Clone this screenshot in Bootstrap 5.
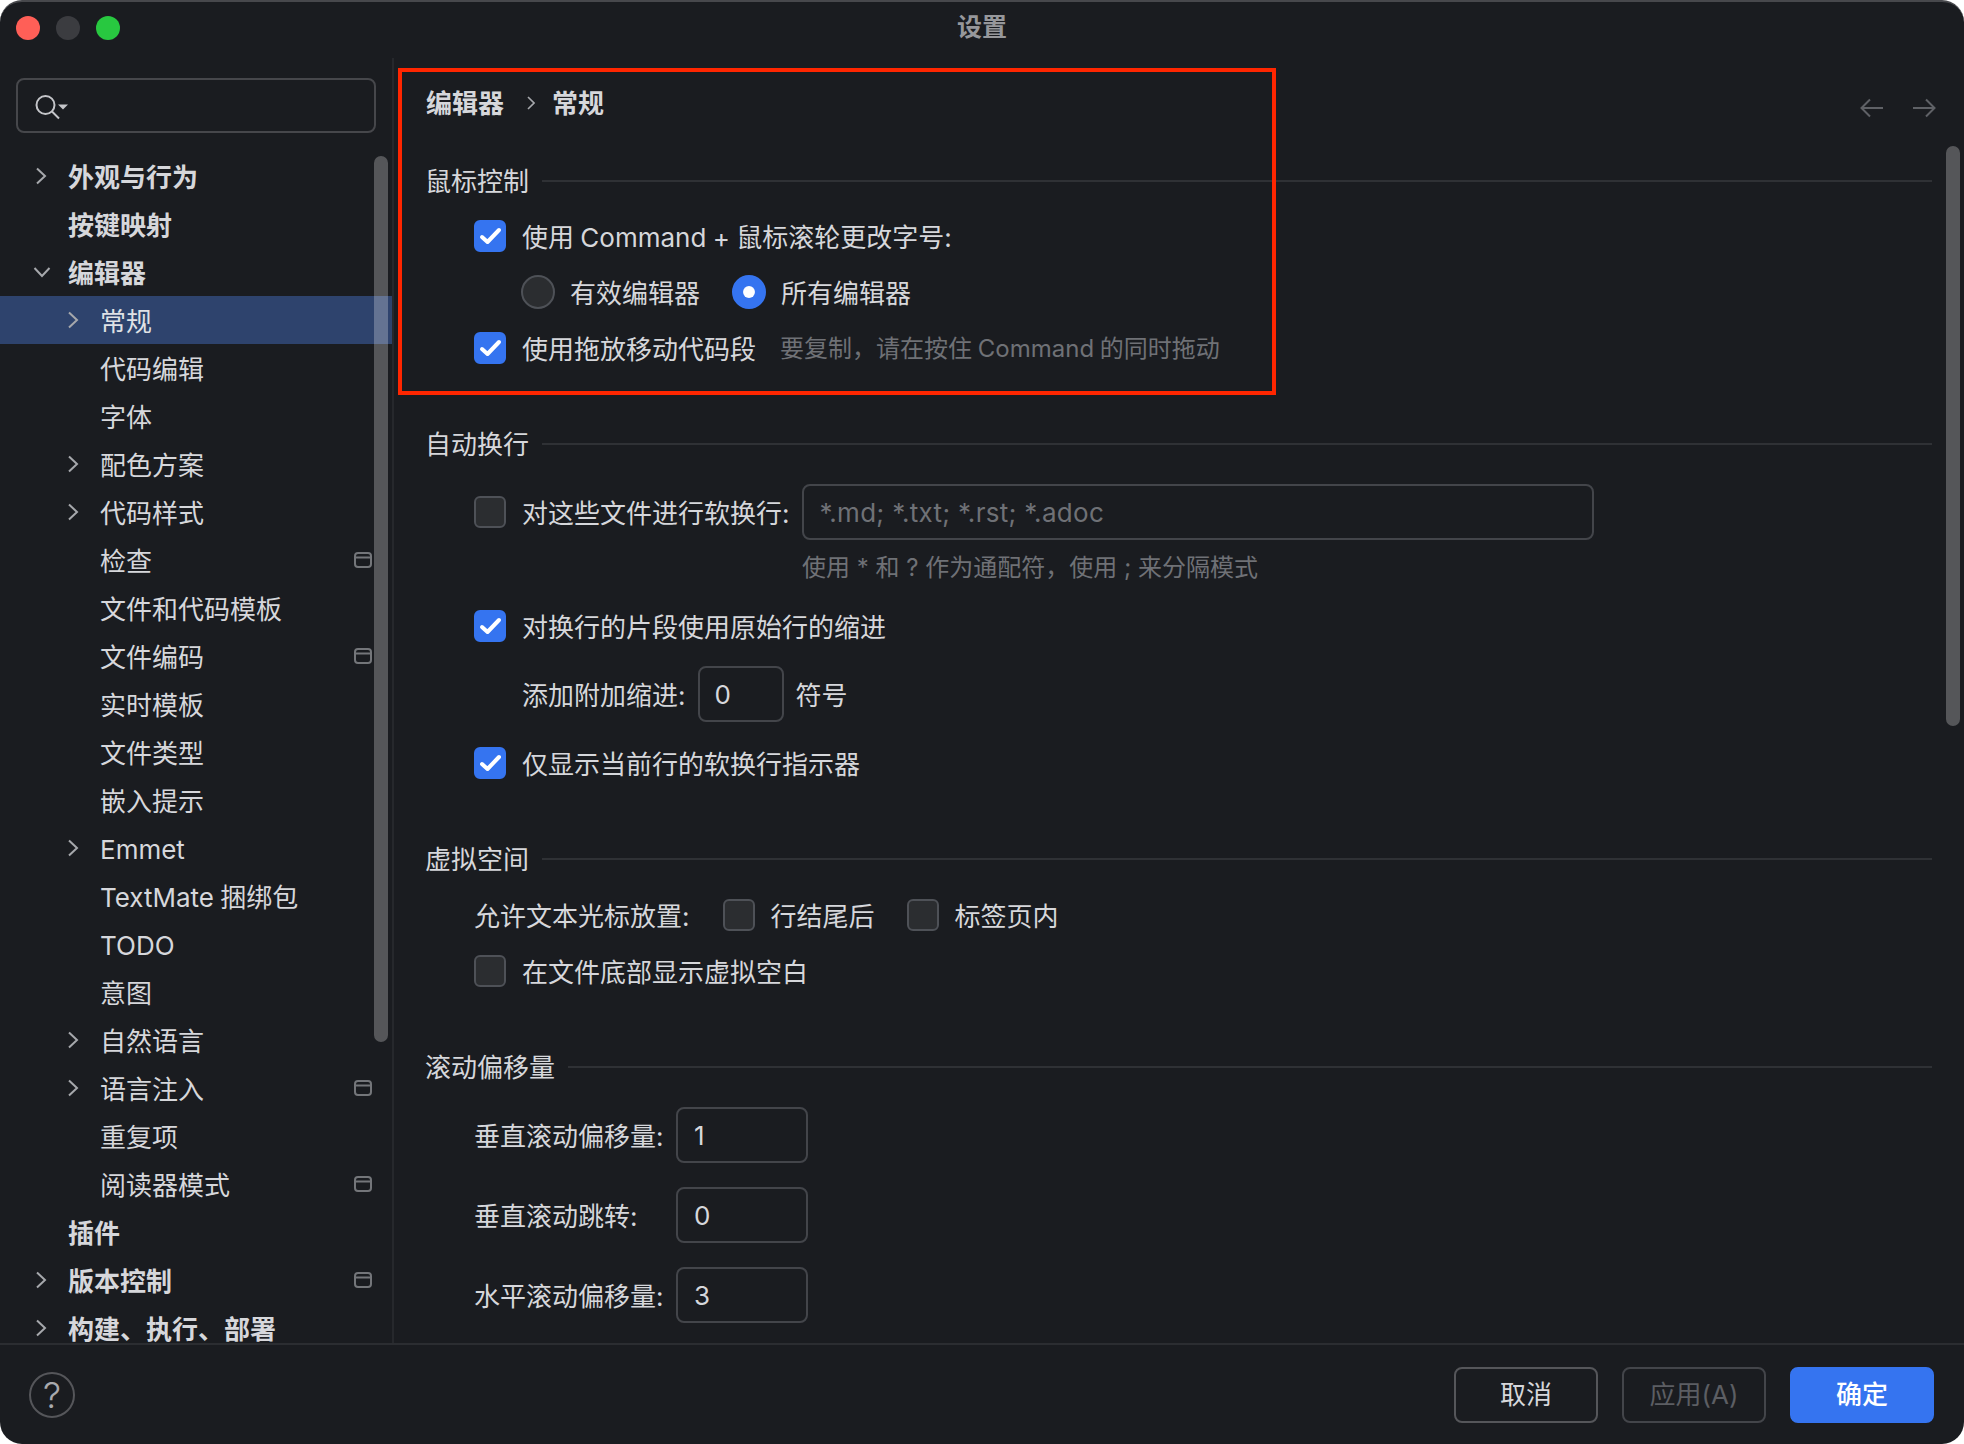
<!doctype html>
<html lang="zh-CN">
<head>
<meta charset="utf-8">
<title>设置</title>
<link href="https://cdn.jsdelivr.net/npm/bootstrap@5.3.0/dist/css/bootstrap.min.css" rel="stylesheet">
<style>
html,body{height:100%;margin:0;background:#fff;}
body{font-family:Inter,"Noto Sans CJK SC",sans-serif;font-size:26px;color:#d6d7db;word-spacing:-1px;}
.win{width:1964px;height:1444px;background:#1a1c20;border-radius:22px;border-top:2px solid #47484c;overflow:hidden;position:relative;}
.tbar{height:56px;flex:none;}
.tb-side{width:200px;padding-left:16px;gap:16px;padding-bottom:4px;}
.light{width:24px;height:24px;border-radius:50%;}
.tb-title{font-size:25px;font-weight:700;color:#96979b;line-height:50px;padding-bottom:7px;}
.wbody{flex:1 1 auto;min-height:0;position:relative;}
.side{width:394px;flex:none;border-right:2px solid #26282c;padding-top:20px;position:relative;overflow:hidden;}
.sbox{margin-left:16px;width:360px;height:55px;border:2px solid #46474b;border-radius:8px;padding-left:16px;}
.tree{margin-top:19px;}
.trow{height:48px;color:#d6d7db;white-space:nowrap;padding-right:20px;padding-top:2px;}
.l1{padding-left:32px;font-weight:700;}
.l2{padding-left:64px;}
.sel{background:#2e436d;color:#dfe1e5;}
.cv{width:36px;flex:none;margin-top:-2px;}
.cv svg{margin-left:3px;}
.cv svg.cvd{margin-left:1px;}
.wini{margin-left:auto;margin-top:-2px;}
.sb{position:absolute;width:14px;border-radius:7px;background:rgba(255,255,255,.26);}
.sb1{left:374px;top:98px;height:886px;}
.sb2{left:1946px;top:88px;height:580px;}
.pane{flex:1 1 auto;min-width:0;padding:21px 32px 0 32px;overflow:hidden;}
.crumb{height:48px;font-weight:700;}
.crumb .sepi{margin:0 17px 0 23px;}
.navi{margin-left:auto;gap:28px;margin-right:-4px;margin-top:10px;}
.stitle{height:40px;gap:13px;white-space:nowrap;margin-left:-1px;}
.stitle::after{content:"";flex:1 1 auto;height:2px;background:#2f3135;}
.s1{margin-top:34px;}
.s2{margin-top:48px;}
.s3{margin-top:48px;}
.orow{height:56px;padding-left:48px;white-space:nowrap;}
.orow>span{padding-top:2px;}
.form-check-input.ck{width:32px;height:32px;margin:0 16px 0 0;flex:none;background-color:#2b2d30;border:2px solid #4e5157;border-radius:6px;background-size:100%;background-origin:border-box;box-shadow:none;}
.form-check-input.ck:checked{background-color:#3574f0;border-color:#3574f0;background-image:url("data:image/svg+xml,%3csvg xmlns='http://www.w3.org/2000/svg' viewBox='0 0 32 32'%3e%3cpath fill='none' stroke='%23fff' stroke-width='4' stroke-linecap='round' stroke-linejoin='round' d='M8 17l5.5 5L25 10'/%3e%3c/svg%3e");}
.form-check-input.rd{width:34px;height:34px;margin:0 15px 0 0;flex:none;background-color:#2b2d30;border:2px solid #4e5157;background-origin:border-box;box-shadow:none;}
.form-check-input.rd:checked{background-color:#3574f0;border-color:#3574f0;background-image:url("data:image/svg+xml,%3csvg xmlns='http://www.w3.org/2000/svg' viewBox='-4 -4 8 8'%3e%3ccircle r='1.4' fill='%23fff'/%3e%3c/svg%3e");}
.ind-r{padding-left:95px;}
.hint{color:#6f7176;font-size:24px;}
.tinp.form-control{height:56px;background:transparent;border:2px solid #43454a;border-radius:8px;color:#d6d7db;font-size:26px;padding:0 16px;box-shadow:none;font-family:inherit;}
.tinp.form-control::placeholder{color:#6f7176;opacity:1;letter-spacing:.3px;}
.w-wide{width:792px;margin-left:12px;flex:none;}
.w-indent{width:86px;margin:0 12px 0 12px;flex:none;padding-left:15px !important;}
.w-num{width:132px;flex:none;}
.hrow{height:40px;margin-top:8px;padding-left:376px;word-spacing:0;}
.mt-7{margin-top:7px;}
.mt-8p{margin-top:8px;}
.mt-10{margin-top:10px;}
.mt-12{margin-top:12px;}
.mt-13{margin-top:13px;}
.numrow{height:56px;padding-left:48px;margin-bottom:24px;white-space:nowrap;}
.numlab{width:202px;flex:none;padding-top:2px;}
.ftop{margin-top:20px;}
.rg2{margin-left:32px !important;}
.lead-lab{margin-right:33px;}
.indent-lab{margin-left:48px;}
.foot{height:101px;flex:none;border-top:2px solid #2b2d31;padding:0 30px 0 29px;}
.help{width:46px;height:46px;border:2px solid #55565a;border-radius:50%;color:#a9aaae;font-size:36px;font-weight:300;line-height:1;}
.fbtns{gap:24px;}
.btn.fb{width:144px;height:56px;padding:0;font-size:26px;border-radius:8px;border:2px solid #55565a;background:transparent;color:#d6d7db;font-family:inherit;}
.btn.fb.off{border-color:#43454a;color:#5c5e63;opacity:1;}
.btn.fb.go{background:#3574f0;border-color:#3574f0;color:#fff;font-weight:500;}
.redbox{position:absolute;left:398px;top:66px;width:878px;height:327px;border:4px solid #ff2600;pointer-events:none;}
</style>
</head>
<body>
<svg width="0" height="0" class="position-absolute">
<symbol id="cr" viewBox="0 0 12 18"><path d="M2 1.5 10 9 2 16.5" fill="none" stroke="#a6a8ac" stroke-width="2"/></symbol>
<symbol id="cd" viewBox="0 0 18 12"><path d="M1.5 2 9 10 16.5 2" fill="none" stroke="#a6a8ac" stroke-width="2"/></symbol>
<symbol id="wn" viewBox="0 0 18 16"><rect x="1" y="1" width="16" height="14" rx="3" fill="none" stroke="#74767a" stroke-width="2"/><path d="M1 5.5H17" stroke="#74767a" stroke-width="2"/></symbol>
</svg>
<div class="win d-flex flex-column">
  <div class="tbar d-flex align-items-center">
    <div class="tb-side d-flex align-items-center">
      <span class="light" style="background:#ff5f57"></span>
      <span class="light" style="background:#3b3c40"></span>
      <span class="light" style="background:#28c840"></span>
    </div>
    <div class="tb-title flex-grow-1 text-center">设置</div>
    <div class="tb-side"></div>
  </div>
  <div class="wbody d-flex">
    <div class="side">
      <div class="sbox d-flex align-items-center">
        <svg width="38" height="28" viewBox="0 0 38 28"><circle cx="11.5" cy="13" r="9" fill="none" stroke="#c4c5c9" stroke-width="2"/><path d="M18 19.5 25 26.5" stroke="#c4c5c9" stroke-width="2"/><path d="M24 12.5h10l-5 5z" fill="#c4c5c9"/></svg>
      </div>
      <div class="tree">
        <div class="trow l1 d-flex align-items-center"><span class="cv d-flex"><svg width="12" height="18"><use href="#cr"/></svg></span>外观与行为</div>
        <div class="trow l1 d-flex align-items-center"><span class="cv"></span>按键映射</div>
        <div class="trow l1 d-flex align-items-center"><span class="cv d-flex"><svg class="cvd" width="18" height="12"><use href="#cd"/></svg></span>编辑器</div>
        <div class="trow l2 sel d-flex align-items-center"><span class="cv d-flex"><svg width="12" height="18"><use href="#cr"/></svg></span>常规</div>
        <div class="trow l2 d-flex align-items-center"><span class="cv"></span>代码编辑</div>
        <div class="trow l2 d-flex align-items-center"><span class="cv"></span>字体</div>
        <div class="trow l2 d-flex align-items-center"><span class="cv d-flex"><svg width="12" height="18"><use href="#cr"/></svg></span>配色方案</div>
        <div class="trow l2 d-flex align-items-center"><span class="cv d-flex"><svg width="12" height="18"><use href="#cr"/></svg></span>代码样式</div>
        <div class="trow l2 d-flex align-items-center"><span class="cv"></span>检查<svg class="wini" width="18" height="16"><use href="#wn"/></svg></div>
        <div class="trow l2 d-flex align-items-center"><span class="cv"></span>文件和代码模板</div>
        <div class="trow l2 d-flex align-items-center"><span class="cv"></span>文件编码<svg class="wini" width="18" height="16"><use href="#wn"/></svg></div>
        <div class="trow l2 d-flex align-items-center"><span class="cv"></span>实时模板</div>
        <div class="trow l2 d-flex align-items-center"><span class="cv"></span>文件类型</div>
        <div class="trow l2 d-flex align-items-center"><span class="cv"></span>嵌入提示</div>
        <div class="trow l2 d-flex align-items-center"><span class="cv d-flex"><svg width="12" height="18"><use href="#cr"/></svg></span>Emmet</div>
        <div class="trow l2 d-flex align-items-center"><span class="cv"></span>TextMate 捆绑包</div>
        <div class="trow l2 d-flex align-items-center"><span class="cv"></span>TODO</div>
        <div class="trow l2 d-flex align-items-center"><span class="cv"></span>意图</div>
        <div class="trow l2 d-flex align-items-center"><span class="cv d-flex"><svg width="12" height="18"><use href="#cr"/></svg></span>自然语言</div>
        <div class="trow l2 d-flex align-items-center"><span class="cv d-flex"><svg width="12" height="18"><use href="#cr"/></svg></span>语言注入<svg class="wini" width="18" height="16"><use href="#wn"/></svg></div>
        <div class="trow l2 d-flex align-items-center"><span class="cv"></span>重复项</div>
        <div class="trow l2 d-flex align-items-center"><span class="cv"></span>阅读器模式<svg class="wini" width="18" height="16"><use href="#wn"/></svg></div>
        <div class="trow l1 d-flex align-items-center"><span class="cv"></span>插件</div>
        <div class="trow l1 d-flex align-items-center"><span class="cv d-flex"><svg width="12" height="18"><use href="#cr"/></svg></span>版本控制<svg class="wini" width="18" height="16"><use href="#wn"/></svg></div>
        <div class="trow l1 d-flex align-items-center"><span class="cv d-flex"><svg width="12" height="18"><use href="#cr"/></svg></span>构建、执行、部署</div>
      </div>
      <div class="sb sb1"></div>
    </div>
    <div class="pane">
      <div class="crumb d-flex align-items-center">
        <span>编辑器</span>
        <svg class="sepi" width="8" height="14" viewBox="0 0 8 14"><path d="M1 1 7 7 1 13" fill="none" stroke="#a6a8ac" stroke-width="1.6"/></svg>
        <span>常规</span>
        <span class="navi d-flex">
          <svg width="24" height="20" viewBox="0 0 24 20"><path d="M23 10H2M10 1.5 1.5 10 10 18.5" fill="none" stroke="#5f6166" stroke-width="2"/></svg>
          <svg width="24" height="20" viewBox="0 0 24 20"><path d="M1 10H22M14 1.5 22.5 10 14 18.5" fill="none" stroke="#5f6166" stroke-width="2"/></svg>
        </span>
      </div>

      <div class="stitle s1 d-flex align-items-center">鼠标控制</div>
      <div class="orow mt-7 d-flex align-items-center"><input class="form-check-input ck" type="checkbox" checked><span>使用 Command + 鼠标滚轮更改字号:</span></div>
      <div class="orow ind-r d-flex align-items-center"><input class="form-check-input rd" type="radio" name="r1"><span>有效编辑器</span><input class="form-check-input rd rg2" type="radio" name="r1" checked><span>所有编辑器</span></div>
      <div class="orow d-flex align-items-center"><input class="form-check-input ck" type="checkbox" checked><span>使用拖放移动代码段</span><span class="hint ms-4">要复制，请在按住 Command 的同时拖动</span></div>

      <div class="stitle s2 d-flex align-items-center">自动换行</div>
      <div class="orow ftop d-flex align-items-center"><input class="form-check-input ck" type="checkbox"><span>对这些文件进行软换行:</span><input class="tinp form-control w-wide" type="text" placeholder="*.md; *.txt; *.rst; *.adoc"></div>
      <div class="hrow hint d-flex align-items-center">使用 * 和 ? 作为通配符，使用 ; 来分隔模式</div>
      <div class="orow mt-10 d-flex align-items-center"><input class="form-check-input ck" type="checkbox" checked><span>对换行的片段使用原始行的缩进</span></div>
      <div class="orow mt-12 d-flex align-items-center"><span class="indent-lab">添加附加缩进:</span><input class="tinp form-control w-indent" type="text" value="0"><span>符号</span></div>
      <div class="orow mt-13 d-flex align-items-center"><input class="form-check-input ck" type="checkbox" checked><span>仅显示当前行的软换行指示器</span></div>

      <div class="stitle s3 d-flex align-items-center">虚拟空间</div>
      <div class="orow mt-8p d-flex align-items-center"><span class="lead-lab">允许文本光标放置:</span><input class="form-check-input ck" type="checkbox"><span>行结尾后</span><input class="form-check-input ck rg2" type="checkbox"><span>标签页内</span></div>
      <div class="orow d-flex align-items-center"><input class="form-check-input ck" type="checkbox"><span>在文件底部显示虚拟空白</span></div>

      <div class="stitle s3 d-flex align-items-center">滚动偏移量</div>
      <div class="numrow ftop d-flex align-items-center"><span class="numlab">垂直滚动偏移量:</span><input class="tinp form-control w-num" type="text" value="1"></div>
      <div class="numrow d-flex align-items-center"><span class="numlab">垂直滚动跳转:</span><input class="tinp form-control w-num" type="text" value="0"></div>
      <div class="numrow d-flex align-items-center"><span class="numlab">水平滚动偏移量:</span><input class="tinp form-control w-num" type="text" value="3"></div>
    </div>
    <div class="sb sb2"></div>
  </div>
  <div class="foot d-flex align-items-center justify-content-between">
    <div class="help d-flex align-items-center justify-content-center">?</div>
    <div class="fbtns d-flex">
      <button class="btn fb" type="button">取消</button>
      <button class="btn fb off" type="button">应用(A)</button>
      <button class="btn fb go" type="button">确定</button>
    </div>
  </div>
  <div class="redbox"></div>
</div>
<script src="https://cdn.jsdelivr.net/npm/bootstrap@5.3.0/dist/js/bootstrap.bundle.min.js"></script>
</body>
</html>
